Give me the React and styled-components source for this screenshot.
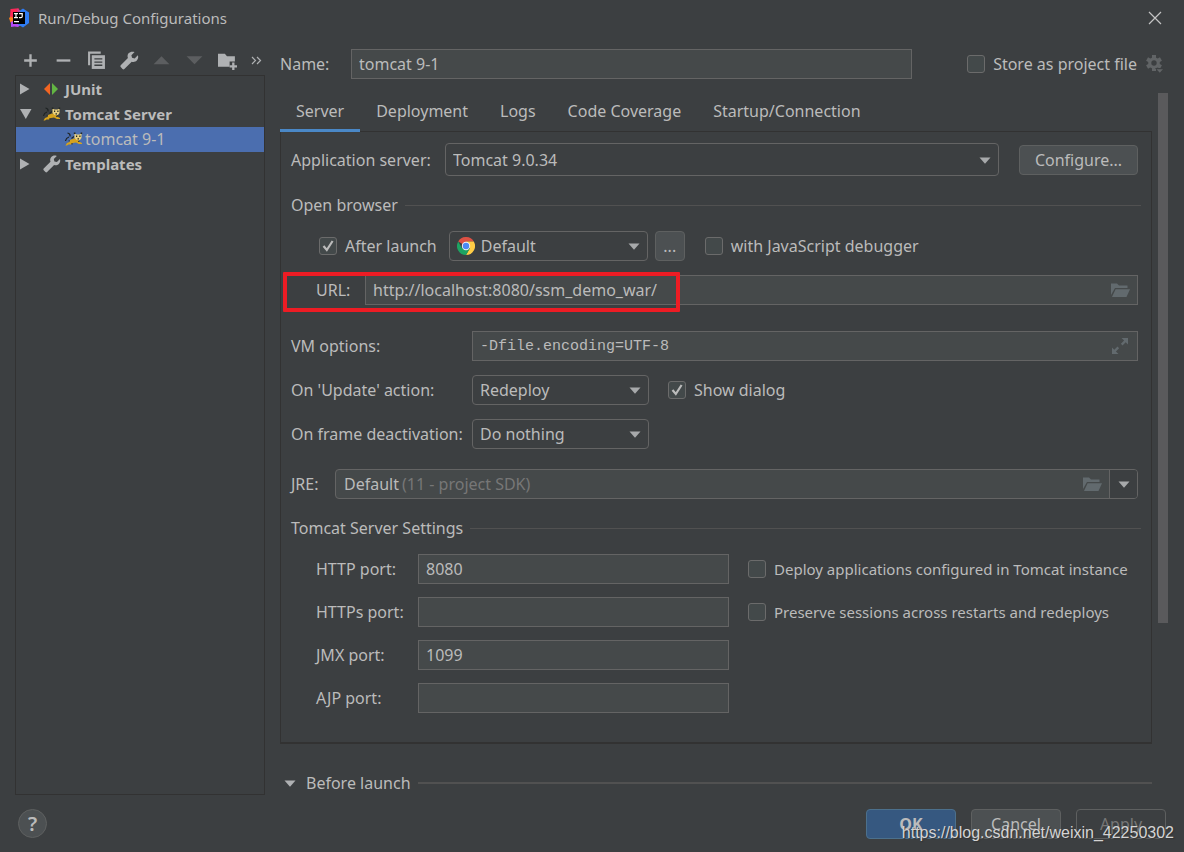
import React from 'react'
import styled, { createGlobalStyle, css } from 'styled-components'

const GlobalStyle = createGlobalStyle`
  * {
    box-sizing: border-box;
  }
  body {
    margin: 0;
    background: #3c3f41;
    color: #bbbbbb;
    font: 16px/22px 'Noto Sans', 'Open Sans', sans-serif;
  }
  button, input, select {
    margin: 0;
    color: inherit;
    font: inherit;
  }
  ul {
    margin: 0;
    padding: 0;
    list-style: none;
  }
  svg {
    display: block;
    flex: none;
  }
`

const Window = styled.div`
  position: relative;
  display: flex;
  flex-direction: column;
  min-height: 100vh;
`

const TitleBar = styled.header`
  display: flex;
  align-items: center;
  gap: 9px;
  height: 37px;
  padding: 0 21px 2px 9px;
`

const Title = styled.h1`
  flex: 1;
  margin: 0;
  font-size: 15px;
  font-weight: 400;
`

const IconButton = styled.button`
  display: flex;
  align-items: center;
  justify-content: center;
  padding: 0;
  border: 0;
  background: none;
`

const Body = styled.div`
  display: flex;
  flex: 1;
  gap: 15px;
  padding: 0 16px 0 15px;
`

const Sidebar = styled.aside`
  display: flex;
  flex: none;
  flex-direction: column;
  width: 250px;
`

const Toolbar = styled.div`
  display: flex;
  align-items: center;
  justify-content: space-between;
  height: 38px;
  padding: 8px 3px 0 6px;
`

const Tree = styled.ul`
  flex: 1;
  padding-top: 1px;
  border: 1px solid #323232;
`

const TreeRow = styled.li`
  display: flex;
  align-items: center;
  height: 25px;
  padding: 0 0 2px 3px;
  font-size: 15px;
  font-weight: 700;
  ${({ $selected }) =>
    $selected &&
    css`
      padding-left: 49px;
      background: #4b6eaf;
      font-size: 16px;
      font-weight: 400;
    `}
`

const TreeArrow = styled.span`
  display: flex;
  width: 24px;
`

const TreeIcon = styled.span`
  display: flex;
  width: ${({ $narrow }) => ($narrow ? '20px' : '22px')};
`

const Main = styled.main`
  display: flex;
  flex: 1;
  flex-direction: column;
  min-width: 0;
`

const NameRow = styled.div`
  display: flex;
  align-items: center;
  height: 56px;
  padding: 0 4px 2px 0;
`

const Label = styled.label`
  flex: none;
  width: ${({ $width }) => $width}px;
  padding-left: ${({ $indent = 0 }) => $indent}px;
  white-space: nowrap;
`

const Field = styled.div`
  display: flex;
  align-items: center;
  flex: ${({ $width }) => ($width ? 'none' : '1')};
  width: ${({ $width }) => ($width ? `${$width}px` : 'auto')};
  height: 30px;
  min-width: 0;
  border: 1px solid #646464;
  background: #45494a;
`

const TextInput = styled.input`
  flex: 1;
  width: 100%;
  min-width: 0;
  height: 100%;
  padding: 0 7px 1px;
  border: 0;
  outline: 0;
  background: none;
  ${({ $mono }) =>
    $mono &&
    css`
      padding: 1px 7px 0;
      font-family: 'Liberation Mono', monospace;
      font-size: 15px;
    `}
`

const FieldButton = styled(IconButton)`
  width: 34px;
  height: 100%;
`

const NameField = styled(Field)`
  margin-right: 55px;
`

const CheckLabel = styled.label`
  display: flex;
  flex: none;
  align-items: center;
  gap: 8px;
  font-size: ${({ $small }) => ($small ? '15px' : '16px')};
  white-space: nowrap;
`

const CheckInput = styled.input`
  appearance: none;
  flex: none;
  width: 18px;
  height: 18px;
  border: 1px solid #6b6b6b;
  border-radius: 3px;
  background: #43494a;
  &:checked {
    background: #43494a
      url("data:image/svg+xml,%3Csvg xmlns='http://www.w3.org/2000/svg' viewBox='0 0 16 16'%3E%3Cpath d='M3.5 8l3.3 4L12.6 3' fill='none' stroke='%23bbb' stroke-width='2.2'/%3E%3C/svg%3E")
      center / 16px no-repeat;
  }
`

const Content = styled.div`
  display: flex;
  flex: 1;
  gap: 6px;
`

const Scroller = styled.div`
  flex: 1;
  min-width: 0;
`

const ScrollThumb = styled.div`
  width: 10px;
  height: 530px;
  background: #5a5a5c;
`

const Tabs = styled.div`
  display: flex;
  height: 39px;
  border-bottom: 1px solid #323232;
`

const Tab = styled.button`
  height: 39px;
  padding: 0 16px;
  border: 0;
  border-bottom: 3px solid ${({ $active }) => ($active ? '#4a88c7' : 'transparent')};
  background: none;
  white-space: nowrap;
`

const Panel = styled.section`
  height: 612px;
  padding: 11px 10px 0;
  border: solid #323232;
  border-width: 0 1px 2px;
`

const Row = styled.div`
  position: relative;
  display: flex;
  align-items: center;
  height: ${({ $height = 30 }) => $height}px;
  margin: 0 3px ${({ $gap = 14 }) => $gap}px 0;
`

const SelectBox = styled.div`
  position: relative;
  flex: ${({ $width }) => ($width ? 'none' : '1')};
  width: ${({ $width }) => ($width ? `${$width}px` : 'auto')};
  height: ${({ $tall }) => ($tall ? '33px' : '30px')};
`

const SelectInput = styled.select`
  appearance: none;
  width: 100%;
  height: 100%;
  padding: 0 30px 0 ${({ $icon }) => ($icon ? '31px' : '7px')};
  border: 1px solid #646464;
  border-radius: 4px;
  outline: 0;
  background: #3c3f41;
`

const SelectArrow = styled.span`
  position: absolute;
  top: 50%;
  right: 8px;
  margin-top: -3px;
  pointer-events: none;
`

const SelectIcon = styled.span`
  position: absolute;
  top: 6px;
  left: 8px;
  pointer-events: none;
`

const Button = styled.button`
  flex: none;
  width: ${({ $width = 90 }) => $width}px;
  height: 30px;
  padding: 0;
  border: 1px solid #5e6060;
  border-radius: 4px;
  background: #4c5052;
  ${({ $primary }) =>
    $primary &&
    css`
      border-color: #4c708c;
      background: #365880;
      font-weight: 700;
    `}
  &:disabled {
    background: none;
    color: #777777;
  }
`

const Spacer = styled.span`
  flex: none;
  width: ${({ $width }) => $width}px;
`

const Heading = styled.div`
  display: flex;
  align-items: center;
  gap: 7px;
  height: 22px;
  white-space: nowrap;
  &::after {
    content: '';
    flex: 1;
    height: ${({ $thick }) => ($thick ? '2px' : '1px')};
    background: #515151;
  }
`

const SectionHeading = styled(Heading)`
  margin: 18px 0 15px;
`

const Highlight = styled.div`
  position: absolute;
  top: -3px;
  left: -8px;
  width: 397px;
  height: 40px;
  border: 4px solid #ed1c24;
  border-radius: 1px;
  pointer-events: none;
`

const JreField = styled(Field)`
  border-radius: 4px;
`

const JreInput = styled.input`
  width: 66px;
  height: 100%;
  padding: 0 0 1px 8px;
  border: 0;
  outline: 0;
  background: none;
`

const JreHint = styled.span`
  flex: 1;
  padding-bottom: 1px;
  color: #777777;
`

const DropButton = styled(IconButton)`
  width: 28px;
  height: 100%;
  border-left: 1px solid #646464;
  border-radius: 0 3px 3px 0;
  background: #3c3f41;
`

const BeforeLaunch = styled.div`
  display: flex;
  align-items: center;
  gap: 10px;
  margin-top: 28px;
  padding-left: 4px;
`

const BeforeLaunchHeading = styled(Heading)`
  flex: 1;
`

const Footer = styled.footer`
  display: flex;
  align-items: center;
  gap: 15px;
  height: 57px;
  padding: 0 18px;
`

const HelpButton = styled.button`
  width: 29px;
  height: 29px;
  margin-right: auto;
  padding: 0;
  border: 1px solid #5e6060;
  border-radius: 50%;
  background: #4c5052;
  font-size: 20px;
  font-weight: 600;
  line-height: 26px;
`

const Watermark = styled.div`
  position: absolute;
  right: 10px;
  bottom: 8px;
  color: #d4d4d4;
  font-family: 'Liberation Sans', Arial, sans-serif;
  font-size: 16px;
  text-shadow: 1px 1px 1px #333333;
  pointer-events: none;
`

const Arrow = ({ color = '#a7a9ab' }) => (
  <svg width="12" height="7" viewBox="0 0 12 7">
    <path d="M0.5 0.5h11L6 6.8z" fill={color} />
  </svg>
)

const AppIcon = () => (
  <svg width="20" height="20" viewBox="0 0 20 20">
    <path d="M1.5 1l8-.8 3 6-6 7-5.5-4z" fill="#fe2857" />
    <path d="M0 10l2-1.5 4 3 0 5-4.5-2z" fill="#fc801d" />
    <path d="M2 14l4-2 7 4-4 3-3.5-.5L2 19z" fill="#b74af7" />
    <path d="M9.5 3.5L14 .5l6 4V15l-6 4.500-5-3z" fill="#2f7df5" />
    <path d="M8 .5l3.5 2.500L9 5z" fill="#c7449b" />
    <path fill="#000" d="M4 4h12v12H4z" />
    <path d="M5 5.6h4M7 5.6v4M5 9.6h4M10 5.6h3.2v2.8q0 1.200-1.300 1.200H10M5 13.7h5" fill="none" stroke="#fff" strokeWidth="1.2" />
  </svg>
)

const WrenchIcon = () => (
  <svg width="18" height="18" viewBox="0 0 18 18">
    <path
      d="M16.9 4.1l-3 2.9-2.5-.5-.6-2.5 3-3C11.7.2 9.4.7 8.1 2.2 7.1 3.5 6.9 5.2 7.5 6.7L.7 13.5c-.5.5-.5 1.2 0 1.7l1.7 1.9c.5.5 1.2.5 1.7 0l7-7c1.7.6 3.5.2 4.8-1.1 1.3-1.3 1.7-3.2 1-4.9z"
      fill="#afb1b3"
    />
  </svg>
)

const TomcatIcon = () => (
  <svg width="18" height="14" viewBox="0 0 18 14">
    <path d="M2.5 1q3 .5 2.5 3.5M4 5Q1 6 .5 9M6.500 6.500L9 4.500" fill="none" stroke="#1f2424" strokeWidth="1.2" />
    <path d="M5 8l4-1.5h4l1 3 3 1.500v1h-3l-3-1.500-3 .5-2 1.500H3.500L2 13.500H.5l1.500-2.500 2.500-1z" fill="#d6a21d" />
    <path d="M9.5 1.5l2 1h3l2-1V6L15 8h-3.500L9.500 6z" fill="#e8cf7e" />
    <path d="M8.8.5h1.700V2H8.800zM15.600.5h1.600V2h-1.600zM11 3.600h1.200V5H11zM14.300 3.600h1.200V5h-1.200zM12.500 6.300H14v1.200h-1.500zM6 11.500h2v.8H6zM13 9h1.500v.8H13zM3.500 8.500H5v.8H3.500z" fill="#252823" />
  </svg>
)

const ChromeIcon = () => (
  <svg width="18" height="18" viewBox="0 0 18 18">
    <path d="M9 9L1.2 4.5A9 9 0 0 1 16.8 4.5H9z" fill="#dd5144" />
    <path d="M9 4.5h7.8A9 9 0 0 1 9 18l3.9-6.8z" fill="#ffcd46" />
    <path d="M1.2 4.5A9 9 0 0 0 9 18l3.9-6.7L9 9 5 11.2z" fill="#1da362" />
    <circle cx="9" cy="9" r="4.2" fill="#f1f1f1" />
    <circle cx="9" cy="9" r="3.2" fill="#4a8af4" />
  </svg>
)

const FolderIcon = () => (
  <svg width="19" height="15" viewBox="0 0 19 15">
    <path d="M0 .5h6l2 2h8.500V5H4L0 12z" fill="#626a6e" />
    <path d="M4.600 6.200H19L15.500 14H1z" fill="#626a6e" />
  </svg>
)

const ExpandIcon = () => (
  <svg width="16" height="16" viewBox="0 0 16 16">
    <path d="M9.5 0H16v6.500l-2.300-2.300-3.200 3.200-1.600-1.600 3.200-3.200zM0 9.500l2.300 2.300L5.500 8.600l1.600 1.600-3.200 3.200L6.500 16H0z" fill="#626a6e" />
  </svg>
)

const GearIcon = () => (
  <svg width="18" height="18" viewBox="0 0 18 18">
    <g fill="#616466">
      <path d="M6 0h4v16H6z" />
      <path d="M6 0h4v16H6z" transform="rotate(60 8 8)" />
      <path d="M6 0h4v16H6z" transform="rotate(120 8 8)" />
      <circle cx="8" cy="8" r="5.8" />
    </g>
    <circle cx="8" cy="8" r="2.7" fill="#3c3f41" />
    <path d="M9 13h9l-4.5 5z" fill="#3c3f41" />
    <path d="M10.5 14.3H17l-3.2 3.4z" fill="#616466" />
  </svg>
)

const tools = [
  { name: 'Add', icon: <path d="M9 3v12M3 9h12" stroke="#afb1b3" strokeWidth="2.2" /> },
  { name: 'Remove', icon: <path d="M2.5 9h13" stroke="#afb1b3" strokeWidth="2.2" /> },
  {
    name: 'Copy',
    icon: (
      <>
        <path d="M1 .5h12v2H3v11H1z" fill="#afb1b3" />
        <path d="M4.5 4H17v13H4.5z" fill="#afb1b3" />
        <path d="M7 7.5h7.5M7 10.5h7.5M7 13.5h7.5" stroke="#3c3f41" strokeWidth="1.2" />
      </>
    ),
  },
  { name: 'Edit templates', icon: <WrenchIcon /> },
  { name: 'Move up', icon: <path d="M1.5 12.5L9 5l7.5 7.5z" fill="#5c5e60" /> },
  { name: 'Move down', icon: <path d="M1.5 5L9 12.5 16.5 5z" fill="#5c5e60" /> },
  {
    name: 'New folder',
    icon: (
      <>
        <path d="M0 2.5h6.5l2 2.5H16v5h-5v5H0z" fill="#afb1b3" />
        <path d="M14.5 11v7M11 14.5h7" stroke="#afb1b3" strokeWidth="2.2" />
      </>
    ),
  },
]

const Check = ({ children, checked, small }) => (
  <CheckLabel $small={small}>
    <CheckInput type="checkbox" defaultChecked={checked} />
    {children}
  </CheckLabel>
)

const Select = ({ id, label, value, width, tall, icon }) => (
  <SelectBox $width={width} $tall={tall}>
    <SelectInput id={id} $icon={Boolean(icon)} aria-label={label}>
      <option>{value}</option>
    </SelectInput>
    {icon && <SelectIcon>{icon}</SelectIcon>}
    <SelectArrow>
      <Arrow />
    </SelectArrow>
  </SelectBox>
)

const ports = [
  { id: 'http', label: 'HTTP port:', value: '8080', check: 'Deploy applications configured in Tomcat instance' },
  { id: 'https', label: 'HTTPs port:', value: '', check: 'Preserve sessions across restarts and redeploys' },
  { id: 'jmx', label: 'JMX port:', value: '1099' },
  { id: 'ajp', label: 'AJP port:', value: '' },
]

const Collapsed = () => (
  <svg width="11" height="12" viewBox="0 0 11 12">
    <path d="M1 .5v11L10.5 6z" fill="#afb1b3" />
  </svg>
)

const Expanded = () => (
  <svg width="13" height="12" viewBox="0 0 13 12">
    <path d="M1 1h11.5L6.8 11z" fill="#afb1b3" />
  </svg>
)

const ConfigurationTree = () => (
  <Tree>
    <TreeRow>
      <TreeArrow>
        <Collapsed />
      </TreeArrow>
      <TreeIcon>
        <svg width="17" height="14" viewBox="0 0 17 14">
          <path d="M7 1v12L1 7z" fill="#f26522" />
          <path d="M9 1v12l6-6z" fill="#62b543" />
        </svg>
      </TreeIcon>
      JUnit
    </TreeRow>
    <TreeRow>
      <TreeArrow>
        <Expanded />
      </TreeArrow>
      <TreeIcon>
        <TomcatIcon />
      </TreeIcon>
      Tomcat Server
    </TreeRow>
    <TreeRow $selected>
      <TreeIcon $narrow>
        <TomcatIcon />
      </TreeIcon>
      tomcat 9-1
    </TreeRow>
    <TreeRow>
      <TreeArrow>
        <Collapsed />
      </TreeArrow>
      <TreeIcon>
        <WrenchIcon />
      </TreeIcon>
      Templates
    </TreeRow>
  </Tree>
)

const ServerPanel = () => (
  <Panel>
    <Row $height={33} $gap={0}>
      <Label htmlFor="server" $width={154}>
        Application server:
      </Label>
      <Select id="server" value="Tomcat 9.0.34" tall />
      <Spacer $width={20} />
      <Button $width={119}>Configure...</Button>
    </Row>
    <SectionHeading>Open browser</SectionHeading>
    <Row>
      <Spacer $width={28} />
      <Check checked>After launch</Check>
      <Spacer $width={12} />
      <Select label="Browser" value="Default" width={199} icon={<ChromeIcon />} />
      <Spacer $width={7} />
      <Button $width={30}>...</Button>
      <Spacer $width={20} />
      <Check>with JavaScript debugger</Check>
    </Row>
    <Row $gap={26}>
      <Label htmlFor="url" $width={74} $indent={25}>
        URL:
      </Label>
      <Field>
        <TextInput id="url" defaultValue="http://localhost:8080/ssm_demo_war/" />
        <FieldButton aria-label="Browse">
          <FolderIcon />
        </FieldButton>
      </Field>
      <Highlight />
    </Row>
    <Row>
      <Label htmlFor="vm" $width={181}>
        VM options:
      </Label>
      <Field>
        <TextInput id="vm" $mono defaultValue="-Dfile.encoding=UTF-8" />
        <FieldButton aria-label="Expand">
          <ExpandIcon />
        </FieldButton>
      </Field>
    </Row>
    <Row>
      <Label htmlFor="update" $width={181}>
        On 'Update' action:
      </Label>
      <Select id="update" value="Redeploy" width={177} />
      <Spacer $width={19} />
      <Check checked>Show dialog</Check>
    </Row>
    <Row $gap={20}>
      <Label htmlFor="frame" $width={181}>
        On frame deactivation:
      </Label>
      <Select id="frame" value="Do nothing" width={177} />
    </Row>
    <Row $gap={0}>
      <Label htmlFor="jre" $width={44}>
        JRE:
      </Label>
      <JreField>
        <JreInput id="jre" defaultValue="Default" />
        <JreHint>(11 - project SDK)</JreHint>
        <FieldButton aria-label="Browse">
          <FolderIcon />
        </FieldButton>
        <DropButton aria-label="Show JREs">
          <Arrow />
        </DropButton>
      </JreField>
    </Row>
    <SectionHeading>Tomcat Server Settings</SectionHeading>
    {ports.map((port) => (
      <Row key={port.id} $gap={13}>
        <Label htmlFor={port.id} $width={127} $indent={25}>
          {port.label}
        </Label>
        <Field $width={311}>
          <TextInput id={port.id} defaultValue={port.value} />
        </Field>
        <Spacer $width={19} />
        {port.check && <Check small>{port.check}</Check>}
      </Row>
    ))}
  </Panel>
)

export default () => (
  <>
    <GlobalStyle />
    <Window>
      <TitleBar>
        <AppIcon />
        <Title>Run/Debug Configurations</Title>
        <IconButton aria-label="Close">
          <svg width="16" height="16" viewBox="0 0 16 16">
            <path d="M2 2l12 12M14 2L2 14" stroke="#c4c4c4" strokeWidth="1.2" />
          </svg>
        </IconButton>
      </TitleBar>
      <Body>
        <Sidebar>
          <Toolbar>
            {tools.map(({ name, icon }) => (
              <IconButton key={name} aria-label={name}>
                <svg width="19" height="19" viewBox="0 0 18 18">
                  {icon}
                </svg>
              </IconButton>
            ))}
            <IconButton aria-label="More">
              <svg width="11" height="9" viewBox="0 0 11 9">
                <path d="M1 1l3.5 3.500L1 8M6 1l3.500 3.500L6 8" fill="none" stroke="#afb1b3" strokeWidth="1.2" />
              </svg>
            </IconButton>
          </Toolbar>
          <ConfigurationTree />
        </Sidebar>
        <Main>
          <NameRow>
            <Label htmlFor="name" $width={71}>
              Name:
            </Label>
            <NameField>
              <TextInput id="name" defaultValue="tomcat 9-1" />
            </NameField>
            <Check>Store as project file</Check>
            <Spacer $width={9} />
            <IconButton aria-label="Storage settings">
              <GearIcon />
            </IconButton>
          </NameRow>
          <Content>
            <Scroller>
              <Tabs>
                <Tab $active>Server</Tab>
                <Tab>Deployment</Tab>
                <Tab>Logs</Tab>
                <Tab>Code Coverage</Tab>
                <Tab>Startup/Connection</Tab>
              </Tabs>
              <ServerPanel />
              <BeforeLaunch>
                <Arrow color="#afb1b3" />
                <BeforeLaunchHeading $thick>Before launch</BeforeLaunchHeading>
              </BeforeLaunch>
            </Scroller>
            <ScrollThumb />
          </Content>
        </Main>
      </Body>
      <Footer>
        <HelpButton aria-label="Help">?</HelpButton>
        <Button $primary>OK</Button>
        <Button>Cancel</Button>
        <Button disabled>Apply</Button>
      </Footer>
      <Watermark>https://blog.csdn.net/weixin_42250302</Watermark>
    </Window>
  </>
)
